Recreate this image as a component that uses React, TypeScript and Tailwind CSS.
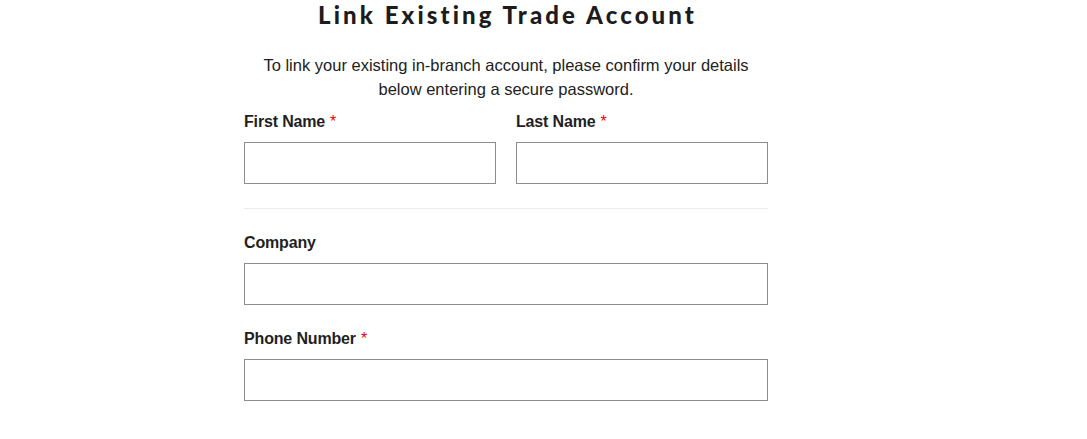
const Field = ({ label, required }: { label: string; required?: boolean }) => (
	<div className="flex flex-col">
		<label className="text-[16px] leading-6 font-bold tracking-[-0.01em] text-[#1f1f1f]">
			{label}
			{required && <span className="text-[#e8000b] font-normal ml-[5px]">*</span>}
		</label>
		<input
			type="text"
			className="mt-2 h-[42px] w-full border border-[#8c8c8c] bg-white outline-none"
		/>
	</div>
);

export default function App() {
	return (
		<div
			className="min-h-[439px] w-full bg-white text-[#1f1f1f]"
			style={{ fontFamily: '"Liberation Sans", Arial, sans-serif' }}
		>
			<div className="ml-[244px] w-[524px]">
				<h1
					className="pl-[3px] text-center text-[24px] leading-[30px] font-black tracking-[3.1px] text-[#1c1c1c]"
					style={{ fontFamily: 'Lato, "DejaVu Sans", sans-serif' }}
				>
					Link Existing Trade Account
				</h1>
				<p className="mt-[23px] text-center text-[16.5px] leading-6 text-[#222]">
					To link your existing in-branch account, please confirm your details
					<br />
					below entering a secure password.
				</p>
				<div className="mt-[9px] grid grid-cols-2 gap-5">
					<Field label="First Name" required />
					<Field label="Last Name" required />
				</div>
				<div className="mt-6 border-t border-[#ebebeb]" />
				<div className="mt-[22px]">
					<Field label="Company" />
				</div>
				<div className="mt-[22px]">
					<Field label="Phone Number" required />
				</div>
			</div>
		</div>
	);
}
